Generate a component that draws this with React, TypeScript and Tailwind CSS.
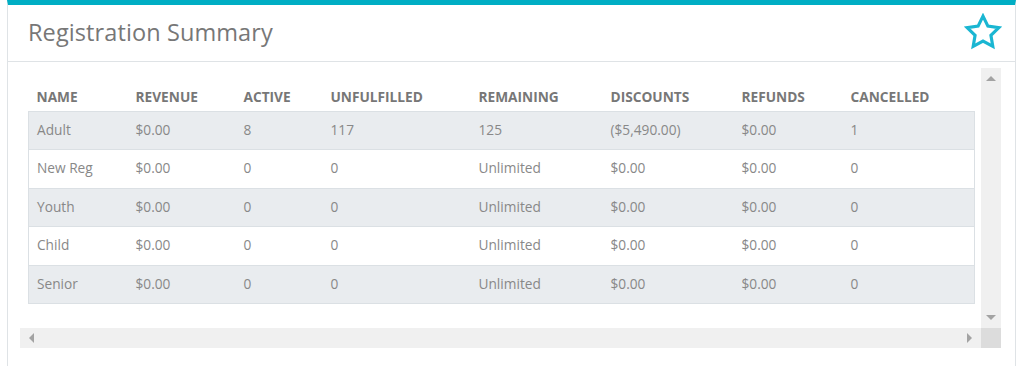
import React from 'react';

const cols = [
  { label: 'Name', w: 'w-[99px]' },
  { label: 'Revenue', w: 'w-[108px]' },
  { label: 'Active', w: 'w-[87px]' },
  { label: 'Unfulfilled', w: 'w-[148px]' },
  { label: 'Remaining', w: 'w-[132px]' },
  { label: 'Discounts', w: 'w-[131px]' },
  { label: 'Refunds', w: 'w-[109px]' },
  { label: 'Cancelled', w: 'w-[132px]' },
];

const rows = [
  ['Adult', '$0.00', '8', '117', '125', '($5,490.00)', '$0.00', '1'],
  ['New Reg', '$0.00', '0', '0', 'Unlimited', '$0.00', '$0.00', '0'],
  ['Youth', '$0.00', '0', '0', 'Unlimited', '$0.00', '$0.00', '0'],
  ['Child', '$0.00', '0', '0', 'Unlimited', '$0.00', '$0.00', '0'],
  ['Senior', '$0.00', '0', '0', 'Unlimited', '$0.00', '$0.00', '0'],
];

const App = () => {
  return (
    <div className="w-[1024px] h-[366px] bg-white overflow-hidden font-['Open_Sans',sans-serif]">
      <div className="ml-[7px] w-[1009px] h-[400px] border-x border-[#dfe3e6] border-t-[5px] border-t-[#00aec4]">
        {/* header */}
        <div className="h-[57px] flex items-center justify-between pl-[20px] pr-[13px] border-b border-[#dfe3e6]">
          <h2 className="text-[23.5px] text-[#777] font-normal tracking-[0.1px]">Registration Summary</h2>
          <svg width="38" height="38" viewBox="0 0 24 24" fill="none" stroke="#1ab6d2" strokeWidth="2" strokeLinejoin="miter" className="-mt-[2px]">
            <polygon points="12 2 15.09 8.26 22 9.27 17 14.14 18.18 21.02 12 17.77 5.82 21.02 7 14.14 2 9.27 8.91 8.26 12 2" />
          </svg>
        </div>

        {/* scroll area */}
        <div className="ml-[12px] mt-[6px] w-[981px] h-[280px] flex flex-col">
          <div className="flex h-[260px]">
            <div className="w-[961px] h-[260px] pl-[8px] pt-[5px] overflow-hidden">
              <table className="w-[946px] border-collapse text-[13.7px] table-fixed">
                <thead>
                  <tr className="h-[38px]">
                    {cols.map((c) => (
                      <th key={c.label} className={`${c.w} text-left font-bold uppercase text-[#777] px-[8px] pt-[12px]`}>
                        {c.label}
                      </th>
                    ))}
                  </tr>
                </thead>
                <tbody>
                  {rows.map((r, i) => (
                    <tr key={r[0]} className={`h-[38.5px] border border-[#dbe0e4] ${i % 2 === 0 ? 'bg-[#e9ecef]' : 'bg-white'}`}>
                      {r.map((cell, j) => (
                        <td key={j} className="px-[8px] text-[#888] whitespace-nowrap">
                          {cell}
                        </td>
                      ))}
                    </tr>
                  ))}
                </tbody>
              </table>
            </div>
            {/* vertical scrollbar */}
            <div className="w-[20px] h-[260px] bg-[#f0f0f0] flex flex-col items-center justify-between py-[8px]">
              <div className="w-0 h-0 border-x-[5px] border-x-transparent border-b-[5px] border-b-[#a3a3a3]" />
              <div className="w-0 h-0 border-x-[5px] border-x-transparent border-t-[5px] border-t-[#a3a3a3]" />
            </div>
          </div>
          <div className="flex h-[20px]">
            {/* horizontal scrollbar */}
            <div className="w-[961px] h-[20px] bg-[#f0f0f0] flex items-center justify-between px-[9px]">
              <div className="w-0 h-0 border-y-[5px] border-y-transparent border-r-[5px] border-r-[#a3a3a3]" />
              <div className="w-0 h-0 border-y-[5px] border-y-transparent border-l-[5px] border-l-[#a3a3a3]" />
            </div>
            <div className="w-[20px] h-[20px] bg-[#dcdcdc]" />
          </div>
        </div>
      </div>
    </div>
  );
};

export default App;
